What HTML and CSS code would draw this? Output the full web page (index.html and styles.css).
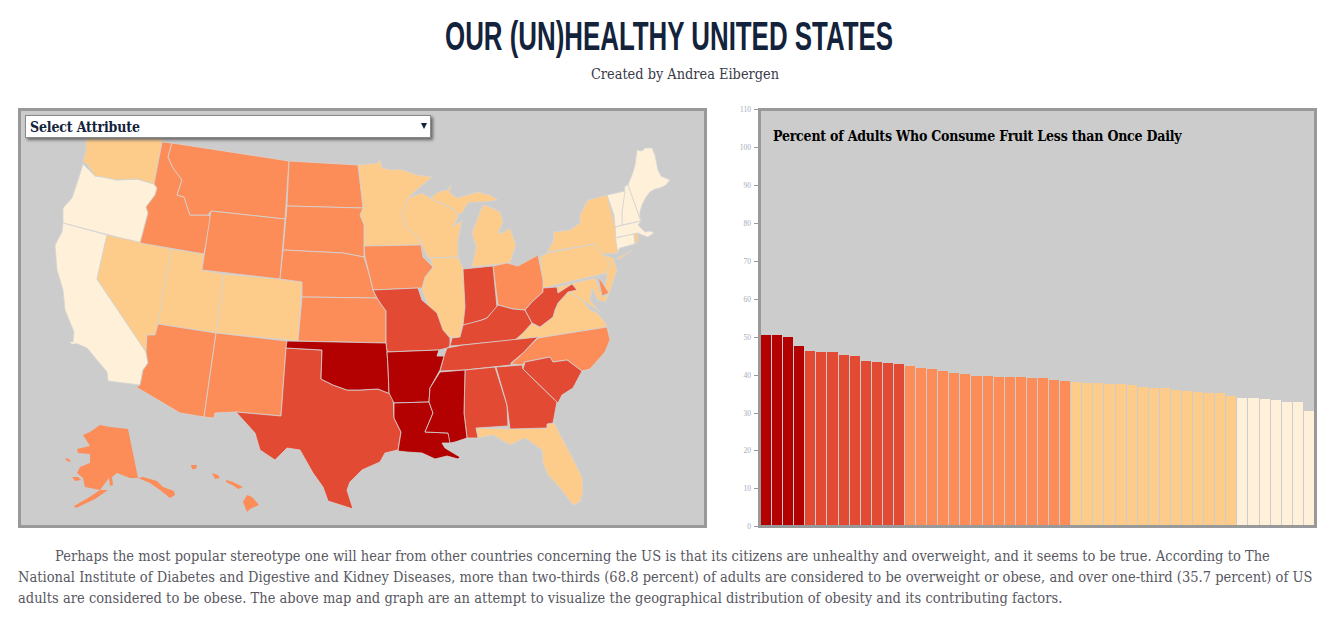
FILE: index.html
```html
<!DOCTYPE html>
<html lang="en">
<head>
<meta charset="utf-8">
<title>Our (Un)healthy United States</title>
<link rel="stylesheet" href="styles.css">
</head>
<body>
<header class="page-header">
  <h1 class="title">OUR (UN)HEALTHY UNITED STATES</h1>
  <p class="byline">Created by Andrea Eibergen</p>
</header>
<main class="viz-row">
  <section class="panel map-panel">
    <div class="select-wrap">
      <select class="attr-select"><option>Select Attribute</option></select>
    </div>
    <svg class="map" viewBox="21 111 683 414" aria-label="Map of US states">
      <g class="q1">
        <polygon points="83,164 95,176 103,177 117,180 137,179 154,184 157,188 155,195 146,207 148,213 140,243 63,223 63,208 72,198 78,180"/>
        <polygon points="63,223 107,235 97,279 146,352 148,363 143,370 140,385 108,381 107,372 97,360 87,348 73,342 74,332 65,310 63,290 57,270 55,245 62,232"/>
        <polygon points="628,185 633,172 635,165 637,150 642,151 645,148 652,148 655,155 658,170 661,176 670,180 666,185 660,188 655,189 650,192 646,197 642,205 640,212 640,219"/>
        <polygon points="625,186 628,185 640,219 641,221 636,222 622,225 622,212"/>
        <polygon points="607,195 625,191 622,212 622,225 615,227 614,215"/>
        <polygon points="615,227 641,221 638,225 645,232 650,231 654,233 648,237 642,235 638,233 615,238"/>
        <polygon points="615,238 634,234 635,244 620,248 617,253"/>
        <polygon points="70,342 76,342 78,343 72,344" class="faint"/>
      </g>
      <g class="q2">
        <polygon points="86,125 162,125 162,142 154,184 137,179 117,180 103,177 95,176 87,164 83,162 86,150"/>
        <polygon points="107,235 171,249 158,324 155,335 147,335 146,352 97,279"/>
        <polygon points="171,249 204,254 202,270 224,274 216,333 158,324"/>
        <polygon points="224,274 280,279 302,282 298,341 216,333"/>
        <polygon points="358,165 378,163 380,159 382,168 393,170 400,169 417,175 432,177 420,187 408,198 403,213 405,227 418,237 421,245 364,246 364,225 360,215 363,208"/>
        <polygon points="403,213 408,198 422,193 430,198 455,210 458,217 453,227 462,220 458,240 458,257 428,258 422,245 418,237 405,227"/>
        <polygon points="430,258 458,257 463,268 465,307 465,320 462,327 460,337 452,338 445,333 435,320 430,310 422,290 425,277 433,268"/>
        <polygon points="483,205 490,207 500,212 503,222 498,233 502,233 510,228 516,245 510,263 472,267 476,247 472,233 478,217"/>
        <polygon points="430,198 440,191 447,190 452,183 449,192 457,198 467,195 478,192 490,195 498,200 485,202 475,202 468,203 462,213 457,215 455,210 443,204"/>
        <polygon points="607,195 615,227 616,242 618,253 602,254 595,244 547,252 554,240 553,232 570,230 580,223 580,215 588,200"/>
        <polygon points="615,259 633,250 620,259"/>
        <polygon points="540,257 547,253 595,244 602,254 610,263 607,273 543,288"/>
        <polygon points="602,254 613,258 617,270 612,285 608,297 605,290 607,273 610,263"/>
        <polygon points="557,287 595,278 602,297 608,295 606,302 598,300 592,288 590,300 600,312 583,300 568,292 558,293"/>
        <polygon points="515,340 523,333 532,323 540,327 553,317 555,310 558,303 568,292 583,300 590,310 597,313 605,322 607,327 538,338"/>
        <polygon points="476,428 510,429 547,428 547,424 554,423 570,453 582,477 583,492 580,502 573,505 560,488 548,475 543,463 542,450 525,438 510,445 493,435 478,438"/>
        <polygon points="634,234 638,233 638,242 635,244"/>
      </g>
      <g class="q3">
        <polygon points="162,142 172,143 168,157 173,168 182,180 177,195 184,197 190,215 208,215 211,217 204,254 140,243 148,213 146,207 155,195 157,188 154,184"/>
        <polygon points="172,143 289,161 285,219 211,211 208,215 190,215 184,197 177,195 182,180 173,168 168,157"/>
        <polygon points="211,211 285,219 280,279 202,270"/>
        <polygon points="289,161 358,165 363,208 287,206"/>
        <polygon points="287,206 363,208 360,215 364,225 364,257 343,253 283,250"/>
        <polygon points="283,250 343,253 364,257 370,277 373,290 377,298 302,297 302,282 280,279"/>
        <polygon points="302,297 377,298 381,304 386,311 386,343 298,341"/>
        <polygon points="158,324 216,333 204,417 180,413 136,387 140,385 143,370 148,363 146,352 147,335 155,335"/>
        <polygon points="216,333 287,341 286,348 281,416 236,412 215,413 214,418 204,417"/>
        <polygon points="364,246 421,245 423,257 433,267 425,277 422,288 373,290 370,277 365,257"/>
        <polygon points="493,266 507,263 518,266 538,255 543,280 543,292 532,302 525,310 513,309 498,305"/>
        <polygon points="511,364 523,353 538,338 607,327 610,340 605,352 590,369 582,371 567,360 553,362 550,357 525,362 522,365"/>
        <polygon points="598,277 602,282 609,293 602,296"/>
        <g class="flat">
          <polygon points="100,425 110,427 128,429 138,478 130,478 117,473 112,477 113,485 110,486 109,478 100,490 85,487 83,478 77,473 80,467 90,463 90,454 78,453 77,449 90,446 83,435 90,432"/>
          <polygon points="100,490 108,490 95,499 76,508 74,506 88,498"/>
          <polygon points="138,478 143,477 157,481 163,487 174,491 175,495 170,498 160,490 150,483"/>
          <polygon points="72,477 78,477 81,480 75,481"/>
          <polygon points="65,458 69,459 71,462 67,461"/>
          <polygon points="247,495 252,497 259,505 250,509 247,512 243,502"/>
          <polygon points="226,480 233,482 243,487 238,489 234,486 226,482"/>
          <polygon points="212,473 218,475 220,478 215,479"/>
          <polygon points="191,465 197,465 196,469 192,469"/>
        </g>
      </g>
      <g class="q4">
        <polygon points="286,348 322,350 321,379 333,385 347,390 360,390 378,389 393,395 394,418 401,432 398,450 385,453 380,462 362,470 350,482 347,490 353,509 328,501 323,487 313,473 300,450 287,448 275,460 260,450 255,433 236,412 281,416"/>
        <polygon points="373,290 418,288 422,300 437,313 443,330 450,338 450,346 447,348 439,350 387,352 386,343 386,311 381,304 377,298"/>
        <polygon points="463,269 493,266 497,307 487,318 482,320 473,323 463,325 465,307"/>
        <polygon points="450,346 452,338 460,337 463,325 482,320 487,318 498,305 513,309 525,310 532,323 523,333 515,340 463,345"/>
        <polygon points="447,348 463,345 538,337 523,353 511,363 511,365 465,370 440,371 444,356"/>
        <polygon points="543,288 557,287 558,293 572,284 577,290 568,292 558,303 555,310 553,317 540,327 532,323 525,310 532,302 543,292"/>
        <polygon points="465,370 495,367 507,405 508,426 476,428 478,438 472,438 467,438 464,413"/>
        <polygon points="496,367 522,365 523,369 557,402 553,423 547,424 547,428 510,429 507,405"/>
        <polygon points="523,369 525,362 550,357 553,362 567,360 582,371 573,388 562,395 558,403"/>
      </g>
      <g class="q5">
        <polygon points="287,341 386,343 387,352 388,367 389,393 393,395 378,389 360,390 347,390 333,385 321,379 322,350 286,348"/>
        <polygon points="387,352 439,350 437,356 444,356 440,370 430,388 429,402 394,403 389,393 388,367"/>
        <polygon points="394,403 429,402 433,413 425,432 448,433 452,443 442,443 445,448 460,457 458,459 447,456 435,459 422,453 407,452 398,451 401,432 394,418"/>
        <polygon points="440,372 465,370 464,413 467,438 455,442 450,443 448,433 425,432 433,413 429,402 430,388"/>
      </g>
    </svg>
  </section>
  <section class="chart-wrap">
    <svg class="axis" viewBox="730 108 28 420" aria-label="Percent axis">
      <g class="ticks">
        <path d="M754 109.5H758M754 147.5H758M754 185.5H758M754 223.5H758M754 261.5H758M754 299.5H758M754 337.5H758M754 375.5H758M754 413.5H758M754 450.5H758M754 488.5H758M754 526.5H758"/>
      </g>
      <g class="labels">
        <text x="751" y="112">110</text>
        <text x="751" y="150">100</text>
        <text x="751" y="188">90</text>
        <text x="751" y="226">80</text>
        <text x="751" y="264">70</text>
        <text x="751" y="302">60</text>
        <text x="751" y="340">50</text>
        <text x="751" y="378">40</text>
        <text x="751" y="416">30</text>
        <text x="751" y="453">20</text>
        <text x="751" y="491">10</text>
        <text x="751" y="529">0</text>
      </g>
    </svg>
    <div class="panel chart-panel">
      <h2 class="chart-title">Percent of Adults Who Consume Fruit Less than Once Daily</h2>
      <div class="bars">
        <div class="bar b5" style="height:190px"></div>
        <div class="bar b5" style="height:190px"></div>
        <div class="bar b5" style="height:188px"></div>
        <div class="bar b5" style="height:179px"></div>
        <div class="bar b4" style="height:174px"></div>
        <div class="bar b4" style="height:173px"></div>
        <div class="bar b4" style="height:173px"></div>
        <div class="bar b4" style="height:170px"></div>
        <div class="bar b4" style="height:169px"></div>
        <div class="bar b4" style="height:164px"></div>
        <div class="bar b4" style="height:163px"></div>
        <div class="bar b4" style="height:162px"></div>
        <div class="bar b4" style="height:161px"></div>
        <div class="bar b3" style="height:159px"></div>
        <div class="bar b3" style="height:157px"></div>
        <div class="bar b3" style="height:156px"></div>
        <div class="bar b3" style="height:154px"></div>
        <div class="bar b3" style="height:152px"></div>
        <div class="bar b3" style="height:151px"></div>
        <div class="bar b3" style="height:149px"></div>
        <div class="bar b3" style="height:149px"></div>
        <div class="bar b3" style="height:148px"></div>
        <div class="bar b3" style="height:148px"></div>
        <div class="bar b3" style="height:148px"></div>
        <div class="bar b3" style="height:147px"></div>
        <div class="bar b3" style="height:147px"></div>
        <div class="bar b3" style="height:145px"></div>
        <div class="bar b3" style="height:144px"></div>
        <div class="bar b2" style="height:143px"></div>
        <div class="bar b2" style="height:142px"></div>
        <div class="bar b2" style="height:142px"></div>
        <div class="bar b2" style="height:141px"></div>
        <div class="bar b2" style="height:141px"></div>
        <div class="bar b2" style="height:140px"></div>
        <div class="bar b2" style="height:138px"></div>
        <div class="bar b2" style="height:137px"></div>
        <div class="bar b2" style="height:137px"></div>
        <div class="bar b2" style="height:135px"></div>
        <div class="bar b2" style="height:134px"></div>
        <div class="bar b2" style="height:133px"></div>
        <div class="bar b2" style="height:132px"></div>
        <div class="bar b2" style="height:132px"></div>
        <div class="bar b2" style="height:129px"></div>
        <div class="bar b1" style="height:127px"></div>
        <div class="bar b1" style="height:127px"></div>
        <div class="bar b1" style="height:126px"></div>
        <div class="bar b1" style="height:125px"></div>
        <div class="bar b1" style="height:123px"></div>
        <div class="bar b1" style="height:123px"></div>
        <div class="bar b1" style="height:114px"></div>
      </div>
    </div>
  </section>
</main>
<p class="intro">Perhaps the most popular stereotype one will hear from other countries concerning the US is that its citizens are unhealthy and overweight, and it seems to be true. According to The National Institute of Diabetes and Digestive and Kidney Diseases, more than two-thirds (68.8 percent) of adults are considered to be overweight or obese, and over one-third (35.7 percent) of US adults are considered to be obese. The above map and graph are an attempt to visualize the geographical distribution of obesity and its contributing factors.</p>
</body>
</html>
```
FILE: styles.css
```css
* { box-sizing: border-box; }
body {
  margin: 0;
  background: #fff;
  font-family: "DejaVu Serif Condensed", "Liberation Serif", serif;
  color: #333;
}
.page-header {
  height: 108px;
  padding-top: 11px;
  text-align: center;
}
.title {
  margin: 0;
  font-family: "Liberation Sans", sans-serif;
  font-size: 41px;
  line-height: 50px;
  font-weight: 700;
  white-space: nowrap;
  color: #14233c;
  transform: scaleX(0.631);
}
.byline {
  margin: 3px 0 0;
  padding-left: 32px;
  font-size: 14.4px;
  line-height: 20px;
  color: #3a3a48;
}
.viz-row {
  display: flex;
  justify-content: space-between;
  align-items: flex-start;
  padding: 0 21px 0 18px;
}
.panel {
  position: relative;
  height: 420px;
  background: #ccc;
  border: 3px solid #999;
}
.map-panel { width: 689px; }
.map { display: block; width: 683px; height: 414px; }
.map polygon { stroke: #d4d4d4; stroke-width: 0.8; stroke-linejoin: round; }
.map .flat polygon { stroke: none; }
.map .faint { stroke: none; }
.q1 { fill: #fef0d9; }
.q2 { fill: #fdcc8a; }
.q3 { fill: #fc8d59; }
.q4 { fill: #e34a33; }
.q5 { fill: #b30000; }
.select-wrap {
  position: absolute;
  left: 4px;
  top: 4px;
  width: 406px;
  height: 23px;
  background: #fff;
  border: 1px solid #8a8a8a;
  box-shadow: 2px 2px 3px #666;
  z-index: 2;
}
.select-wrap::after {
  content: "";
  position: absolute;
  right: 3px;
  top: 7px;
  border-left: 3px solid transparent;
  border-right: 3px solid transparent;
  border-top: 6px solid #14233c;
}
.attr-select {
  appearance: none;
  display: block;
  width: 100%;
  height: 100%;
  padding: 0 0 0 4px;
  border: 0;
  background: transparent;
  font-family: inherit;
  font-size: 14px;
  letter-spacing: -0.15px;
  font-weight: 700;
  color: #14233c;
}
.chart-wrap { display: flex; }
.axis { display: block; width: 28px; height: 420px; overflow: visible; }
.ticks path { stroke: #999; stroke-width: 1; fill: none; }
.labels text {
  font-family: "Liberation Serif", serif;
  font-size: 7.5px;
  fill: #a3abb8;
  text-anchor: end;
}
.chart-panel { width: 559px; }
.chart-title {
  position: absolute;
  left: 12px;
  top: 15px;
  margin: 0;
  font-size: 14px;
  letter-spacing: -0.21px;
  line-height: 20px;
  font-weight: 700;
  color: #000;
}
.bars {
  display: flex;
  align-items: flex-end;
  gap: 1px;
  height: 100%;
}
.bar { flex: 1; }
.b1 { background: #fef0d9; }
.b2 { background: #fdcc8a; }
.b3 { background: #fc8d59; }
.b4 { background: #e34a33; }
.b5 { background: #b30000; }
.intro {
  margin: 18px 18px 0;
  font-size: 14.5px;
  letter-spacing: 0.025px;
  line-height: 21px;
  text-indent: 37px;
  color: #58585f;
}
```
